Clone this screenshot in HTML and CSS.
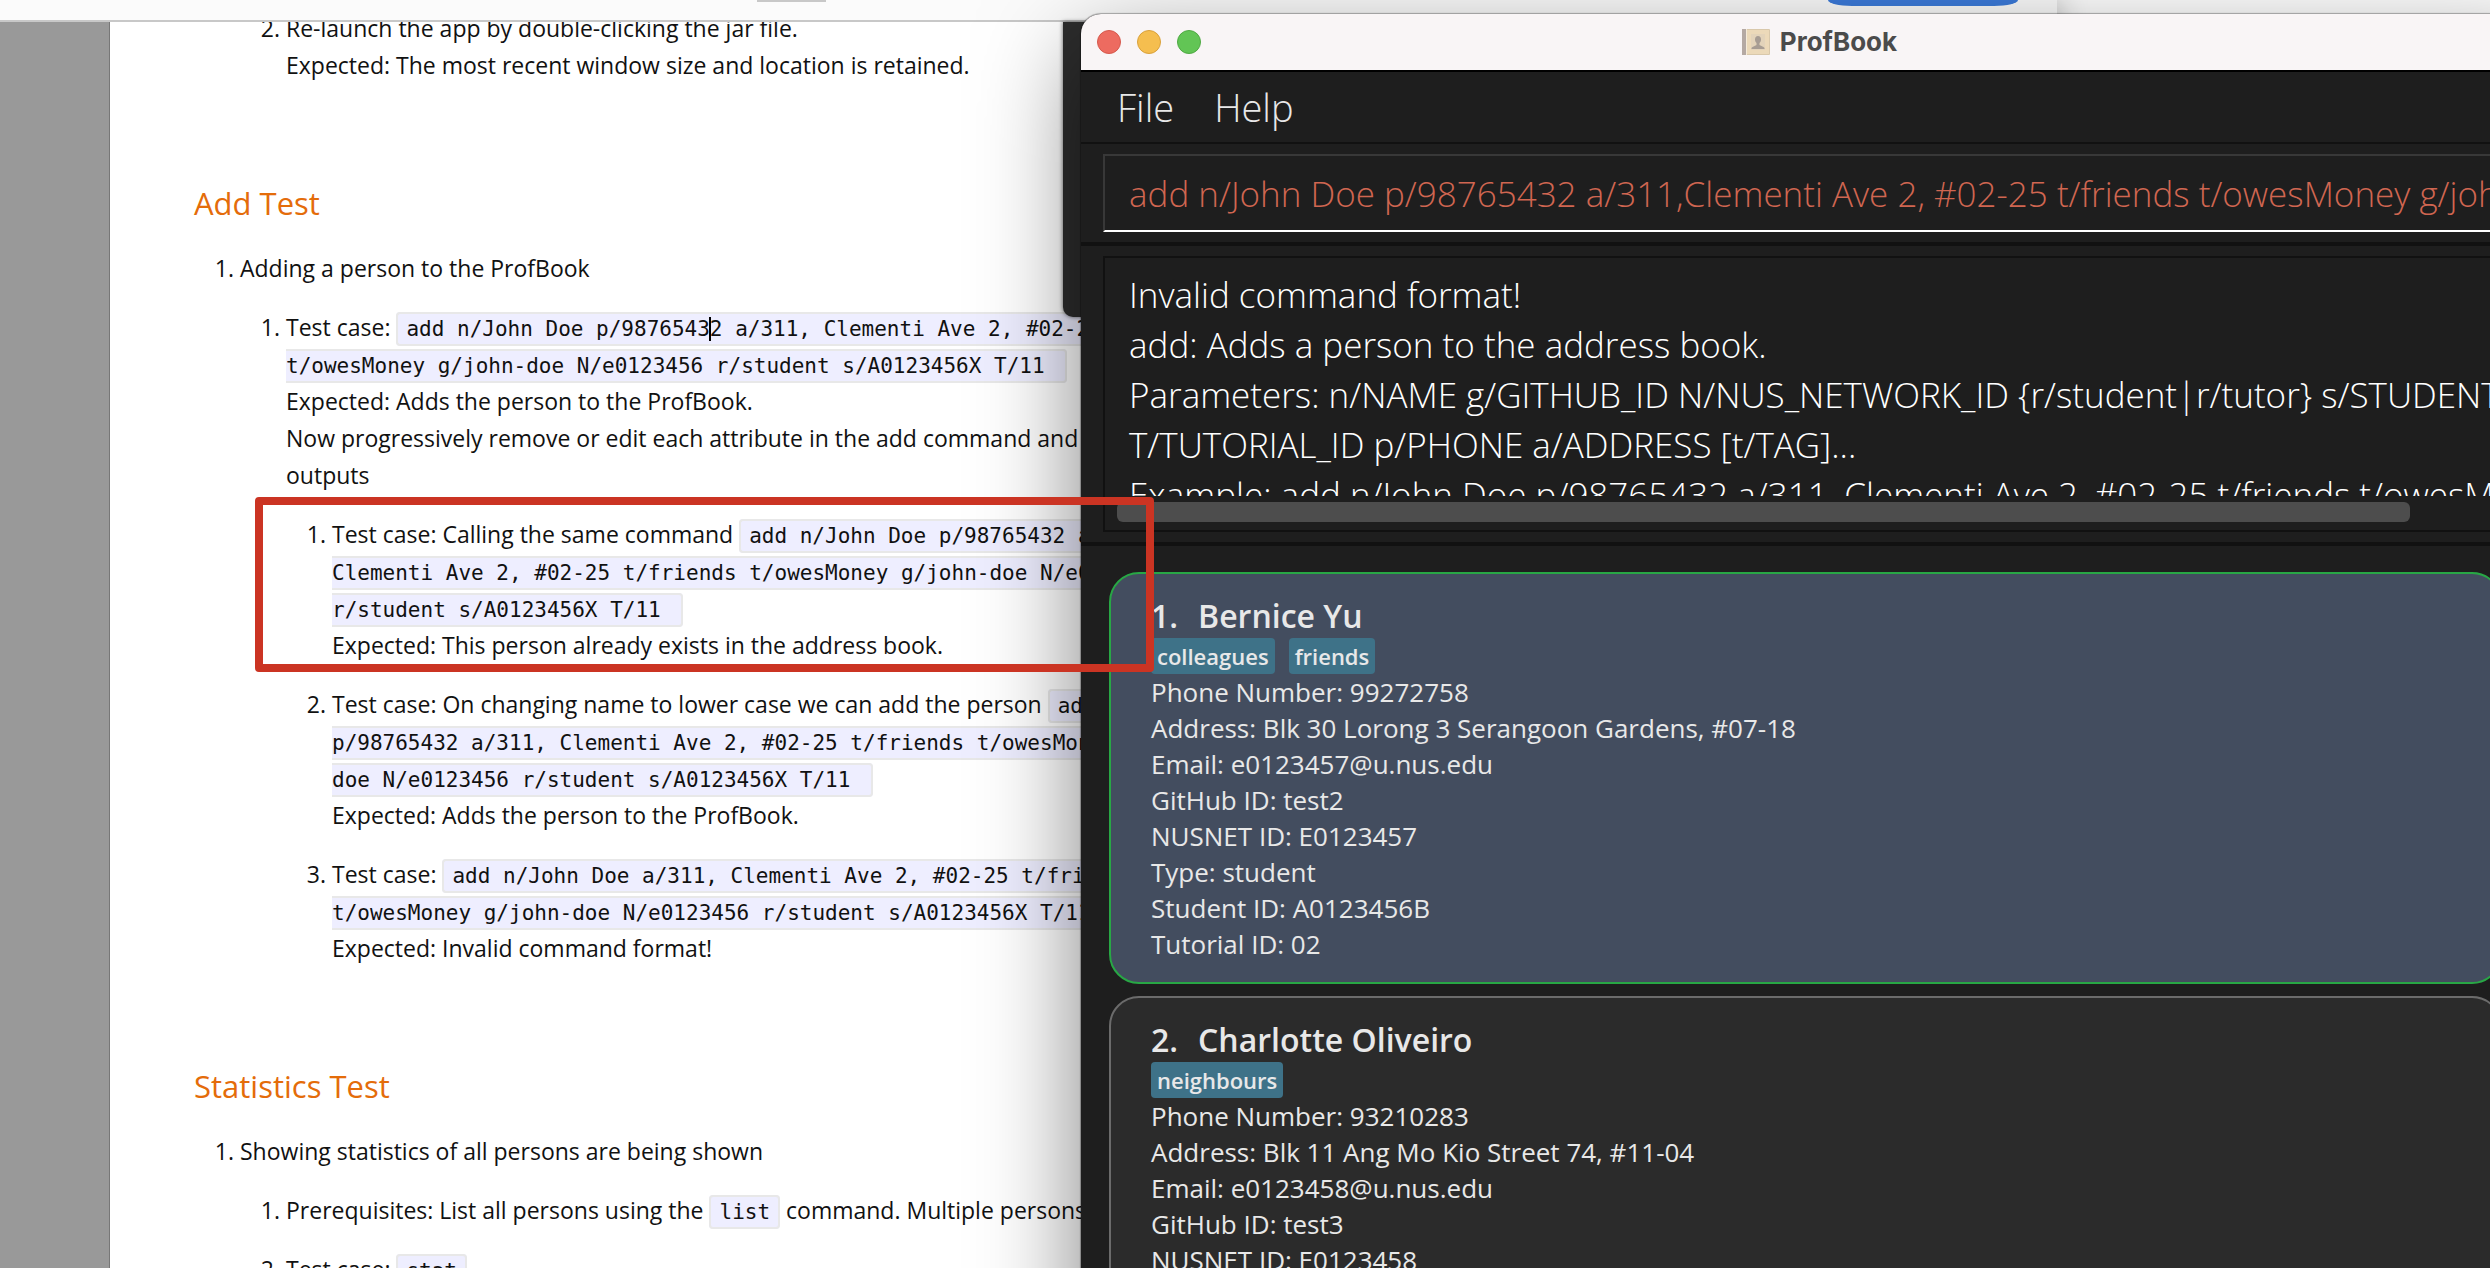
FILE: index.html
```html
<!DOCTYPE html>
<html lang="en">
<head>
<meta charset="utf-8">
<title>ProfBook manual testing</title>
<link rel="stylesheet" href="styles.css">
</head>
<body>
<div class="desktop">
  <section class="browser" aria-label="Developer guide">
    <header class="toolbar">
      <span class="page-field"></span>
      <button class="share" type="button" aria-label="Share"></button>
    </header>
    <div class="viewer">
      <main class="paper">
        <ol class="level top-level">
          <li class="plain">
            <ol class="level" start="2">
              <li>Re-launch the app by double-clicking the jar file.<br>Expected: The most recent window size and location is retained.</li>
            </ol>
          </li>
        </ol>

        <h2 class="heading">Add Test</h2>
        <ol class="level top-level">
          <li>Adding a person to the ProfBook
            <ol class="level">
              <li>Test case: <code>add n/John Doe p/9876543<span class="caret"></span>2 a/311, Clementi Ave 2, #02-25<br>t/owesMoney g/john-doe N/e0123456 r/student s/A0123456X T/11&nbsp;</code><br>Expected: Adds the person to the ProfBook.<br>Now progressively remove or edit each attribute in the add command and<br>outputs
                <ol class="level">
                  <li>Test case: Calling the same command <code>add n/John Doe p/98765432 a/311,<br>Clementi Ave 2, #02-25 t/friends t/owesMoney g/john-doe N/e0123456<br>r/student s/A0123456X T/11&nbsp;</code><br>Expected: This person already exists in the address book.</li>
                  <li>Test case: On changing name to lower case we can add the person <code>add n/john doe<br>p/98765432 a/311, Clementi Ave 2, #02-25 t/friends t/owesMoney g/john-<br>doe N/e0123456 r/student s/A0123456X T/11&nbsp;</code><br>Expected: Adds the person to the ProfBook.</li>
                  <li>Test case: <code>add n/John Doe a/311, Clementi Ave 2, #02-25 t/friends<br>t/owesMoney g/john-doe N/e0123456 r/student s/A0123456X T/11&nbsp;</code><br>Expected: Invalid command format!</li>
                </ol>
              </li>
            </ol>
          </li>
        </ol>

        <h2 class="heading">Statistics Test</h2>
        <ol class="level top-level">
          <li>Showing statistics of all persons are being shown
            <ol class="level">
              <li>Prerequisites: List all persons using the <code>list</code> command. Multiple persons</li>
              <li>Test case: <code>stat</code></li>
            </ol>
          </li>
        </ol>
      </main>
    </div>
  </section>

  <div class="back-window"></div>

  <section class="app" aria-label="ProfBook">
    <header class="titlebar">
      <div class="lights">
        <button class="light close" type="button" aria-label="Close"></button>
        <button class="light minimise" type="button" aria-label="Minimise"></button>
        <button class="light zoom" type="button" aria-label="Zoom"></button>
      </div>
      <h1 class="title">
        <svg class="book" viewBox="0 0 28 26" aria-hidden="true">
          <rect x="0" y="0" width="28" height="26" rx="1" fill="#d9c8ab"/>
          <rect x="5" y="1" width="22" height="24" fill="#ecd9b9"/>
          <rect x="0" y="0" width="4" height="26" fill="#b5a9a3"/>
          <rect x="4" y="0" width="1" height="26" fill="#f5ead8"/>
          <rect x="9" y="5" width="14" height="16" fill="#e3d3ba"/>
          <path d="M16 7c2 0 3 1.500 3 3.500 0 1.500-.5 2.500-1.500 3.500v2l4 2c1 .5 1 1 1 2h-13c0-1 0-1.500 1-2l4-2v-2c-1-1-1.500-2-1.500-3.500C13 8.500 14 7 16 7z" fill="#a79c93"/>
        </svg>
        <span>ProfBook</span>
      </h1>
      <span></span>
    </header>
    <nav class="menubar">
      <button class="menu" type="button">File</button>
      <button class="menu" type="button">Help</button>
    </nav>
    <div class="pane">
      <input class="command" type="text" aria-label="Command" value="add n/John Doe p/98765432 a/311,Clementi Ave 2, #02-25 t/friends t/owesMoney g/john-doe">
    </div>
    <div class="pane">
      <div class="result">
        <textarea class="output" readonly aria-label="Result">Invalid command format!
add: Adds a person to the address book.
Parameters: n/NAME g/GITHUB_ID N/NUS_NETWORK_ID {r/student|r/tutor} s/STUDENT_ID
T/TUTORIAL_ID p/PHONE a/ADDRESS [t/TAG]...
Example: add n/John Doe p/98765432 a/311, Clementi Ave 2, #02-25 t/friends t/owesMoney</textarea>
        <div class="track"><div class="thumb"></div></div>
      </div>
    </div>
    <ul class="people">
      <li class="card selected">
        <h3 class="name"><span>1.</span><span>Bernice Yu</span></h3>
        <div class="tags"><span class="tag">colleagues</span><span class="tag">friends</span></div>
        <p>Phone Number: 99272758</p>
        <p>Address: Blk 30 Lorong 3 Serangoon Gardens, #07-18</p>
        <p>Email: e0123457@u.nus.edu</p>
        <p>GitHub ID: test2</p>
        <p>NUSNET ID: E0123457</p>
        <p>Type: student</p>
        <p>Student ID: A0123456B</p>
        <p>Tutorial ID: 02</p>
      </li>
      <li class="card">
        <h3 class="name"><span>2.</span><span>Charlotte Oliveiro</span></h3>
        <div class="tags"><span class="tag">neighbours</span></div>
        <p>Phone Number: 93210283</p>
        <p>Address: Blk 11 Ang Mo Kio Street 74, #11-04</p>
        <p>Email: e0123458@u.nus.edu</p>
        <p>GitHub ID: test3</p>
        <p>NUSNET ID: E0123458</p>
        <p>Type: student</p>
      </li>
    </ul>
  </section>

  <div class="highlight"></div>
</div>
</body>
</html>
```

FILE: styles.css
```css
* { box-sizing: border-box; }

body {
  margin: 0;
  font-family: "Open Sans", "Noto Sans", sans-serif;
}

h1, h2, h3, p, ul, ol { margin: 0; padding: 0; font-weight: 400; }

button {
  border: 0;
  padding: 0;
  background: none;
  color: inherit;
  font: inherit;
}

.desktop {
  position: relative;
  height: 100vh;
  overflow: hidden;
  background: #fff;
}

/* Browser window with the guide */
.browser {
  position: relative;
  isolation: isolate;
  width: 2057px;
  height: 100%;
  overflow: hidden;
  background: #fff;
  box-shadow: 0 0 30px rgba(0, 0, 0, .3);
}

.toolbar {
  position: absolute;
  inset: 0 0 auto 0;
  z-index: 1;
  display: flex;
  justify-content: space-between;
  align-items: flex-start;
  height: 22px;
  padding: 0 39px 0 757px;
  background: #fbfbfb;
  border-bottom: 2px solid #c8c8c8;
}

.page-field { width: 69px; height: 2px; background: #c8c8c8; }

.share {
  width: 190px;
  height: 6px;
  background: #3b7ad9;
  border-radius: 0 0 24px 24px / 0 0 6px 6px;
}

.viewer {
  height: 100%;
  padding-left: 109px;
  background: #999;
}

.paper {
  height: 100%;
  padding: 10px 0 0 84px;
  overflow: hidden;
  background: #fff;
  border-left: 1px solid #777;
  color: #111;
  font-size: 23px;
  line-height: 37px;
  white-space: nowrap;
}

.heading {
  margin: 97px 0 25px;
  color: #e46c0a;
  font-size: 31px;
  line-height: 44px;
}

.level { padding-left: 46px; }
.level .level { margin-top: 22px; }
.level .plain { list-style: none; }
.plain .level { margin-top: 0; }
.level .level .level > li + li,
.level .level > li + li { margin-top: 22px; }

code {
  padding: 3px 8px;
  background: #eef;
  border: 2px solid #e8e8e8;
  border-radius: 4px;
  font-family: "DejaVu Sans Mono", monospace;
  font-size: 21px;
  line-height: 24px;
}

.caret {
  display: inline-block;
  width: 2px;
  height: 24px;
  margin: 0 -1px;
  background: #000;
  vertical-align: -5px;
}

/* Dark window peeking out behind the app */
.back-window {
  position: absolute;
  top: 22px;
  left: 1063px;
  width: 200px;
  height: 295px;
  background: #2d2d2d;
  border-radius: 0 0 0 10px;
  box-shadow: 0 0 4px rgba(0, 0, 0, .6);
}

/* App window */
.app {
  position: absolute;
  top: 14px;
  left: 1081px;
  right: -68px;
  bottom: -400px;
  overflow: hidden;
  background: #1e1e1e;
  border-radius: 20px;
  box-shadow: 0 0 1px 1px rgba(0, 0, 0, .3), 0 36px 100px rgba(0, 0, 0, .5);
  color: #e8e8e8;
}

.titlebar {
  display: grid;
  grid-template-columns: 1fr auto 1fr;
  align-items: center;
  height: 58px;
  padding: 0 16px;
  background: #f9f5f6;
  border-bottom: 2px solid #000;
}

.lights { display: flex; gap: 16px; }

.light {
  width: 24px;
  height: 24px;
  border: 1px solid #d5594d;
  border-radius: 50%;
  background: #ed6b60;
}
.minimise { background: #f5be4f; border-color: #d9a13c; }
.zoom { background: #62c555; border-color: #50a944; }

.title {
  display: flex;
  align-items: center;
  gap: 10px;
  color: #4b4b4b;
  font-family: Inter, sans-serif;
  font-size: 26px;
  font-weight: 700;
  line-height: 30px;
}

.book { width: 28px; height: 26px; }

.menubar {
  display: flex;
  gap: 40px;
  height: 72px;
  padding: 6px 36px;
  border-bottom: 2px solid #111;
}

.menu {
  font-size: 38px;
  font-weight: 300;
  line-height: 54px;
}

.pane {
  padding: 10px 22px;
  border-bottom: 4px solid #111;
}

.command {
  display: block;
  width: 100%;
  height: 78px;
  padding: 0 24px;
  background: none;
  border: 2px solid #383838;
  border-bottom-color: #fff;
  outline: 0;
  color: #d06651;
  font: 300 35px "Open Sans", sans-serif;
}

.result {
  height: 276px;
  border: 2px solid #111;
}

.output {
  display: block;
  width: 100%;
  height: 238px;
  padding: 12px 24px 0;
  overflow: hidden;
  background: none;
  border: 0;
  outline: 0;
  resize: none;
  color: #fff;
  font: 300 35px/50px "Open Sans", sans-serif;
  white-space: pre;
}

.track { padding: 6px 12px; }

.thumb {
  width: 92%;
  height: 20px;
  background: #4d4d4d;
  border-radius: 6px;
}

.people {
  display: flex;
  flex-direction: column;
  gap: 12px;
  padding: 26px 56px 26px 28px;
  list-style: none;
}

.card {
  padding: 20px 40px;
  background: #2b2b2b;
  border: 2px solid #6b6b6b;
  border-radius: 30px;
  font-size: 26px;
  line-height: 36px;
}

.selected { background: #434d5f; border-color: #28a745; }

.name {
  display: flex;
  gap: 20px;
  font-size: 32px;
  font-weight: 600;
  line-height: 44px;
}

.tags { display: flex; gap: 14px; }

.tag {
  padding: 0 6px;
  background: #3e7288;
  border-radius: 4px;
  font-size: 22px;
  font-weight: 600;
}

/* Red marker drawn over both windows */
.highlight {
  position: absolute;
  top: 497px;
  left: 255px;
  width: 899px;
  height: 175px;
  border: 8px solid #cb3423;
  border-radius: 4px;
}
```
